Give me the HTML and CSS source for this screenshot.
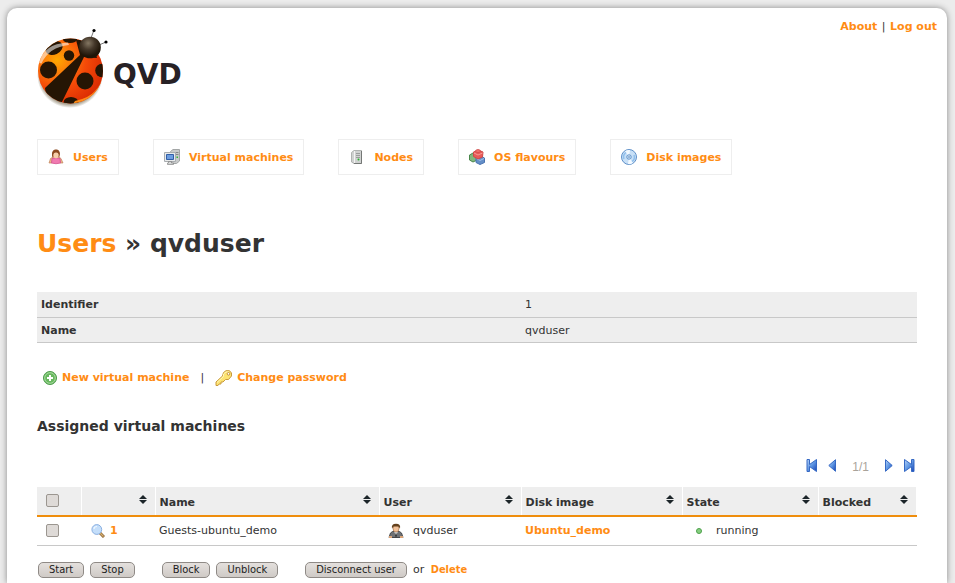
FILE: index.html
```html
<!DOCTYPE html>
<html lang="en">
<head>
<meta charset="utf-8">
<title>QVD - Users</title>
<link rel="stylesheet" href="styles.css">
</head>
<body>
<svg class="defs" width="0" height="0" aria-hidden="true">
  <defs>
    <linearGradient id="blue" x1="0" y1="0" x2="1" y2="1"><stop offset="0" stop-color="#b5d2f8"/><stop offset=".5" stop-color="#5f97e3"/><stop offset="1" stop-color="#1743b5"/></linearGradient>
    <symbol id="sort" viewBox="0 0 8 10"><path d="M4 0 8 4H0zM4 9 0 5h8z" fill="#1c2529"/></symbol>
  </defs>
</svg>
<div class="page">
  <header class="top">
    <a class="logo" href="#">
      <svg width="74" height="84" viewBox="0 0 74 84" aria-hidden="true">
        <defs>
          <radialGradient id="shell" gradientUnits="userSpaceOnUse" cx="20" cy="32" r="48"><stop offset="0" stop-color="#ffa800"/><stop offset=".3" stop-color="#fb7a0a"/><stop offset=".6" stop-color="#f54a08"/><stop offset="1" stop-color="#dc2d03"/></radialGradient>
          <radialGradient id="head" cx=".42" cy=".3" r=".6"><stop offset="0" stop-color="#837662"/><stop offset=".5" stop-color="#45382a"/><stop offset="1" stop-color="#1f1508"/></radialGradient>
          <radialGradient id="under" cx=".5" cy=".5" r=".5"><stop offset=".84" stop-color="#8a8069"/><stop offset="1" stop-color="#fff"/></radialGradient>
          <clipPath id="body"><circle cx="33.500" cy="43" r="32.500"/></clipPath>
        </defs>
        <circle cx="33" cy="47" r="33" fill="url(#under)"/>
        <g clip-path="url(#body)">
          <path d="M0 8h74v76H0z" fill="url(#shell)"/>
          <g fill="#251504">
            <circle cx="11.500" cy="42" r="8.500"/><circle cx="32" cy="27.500" r="5.200"/>
            <ellipse cx="17" cy="20" rx="9" ry="6.500" transform="rotate(-25 17 20)"/>
            <ellipse cx="33" cy="11.500" rx="7" ry="3.500"/>
            <circle cx="48" cy="53" r="8.500"/><circle cx="65" cy="42.500" r="6.800"/>
            <ellipse cx="34" cy="74.500" rx="7.500" ry="5.500"/>
            <path d="M39 12 43 27 8 60 10 76 24 76 47 29 60 30 54 10z"/>
          </g>
          <path d="M64 62Q53 74 36 76L38 73Q52 70 58 63Q65 56 66 47z" fill="#ff8b18"/>
        </g>
        <path d="M2.500 35Q6 16 31 14.500L32 17Q12 19 4.500 35.500z" fill="#fff" opacity=".55"/>
        <path d="M54 10 57 2M62 17 69 14" stroke="#777" stroke-width="1"/>
        <circle cx="57" cy="2.500" r="1.600"/><circle cx="69" cy="14" r="1.600"/>
        <circle cx="53" cy="19.500" r="10.800" fill="url(#head)"/>
      </svg>
      <span class="brand">QVD</span>
    </a>
    <div class="account"><a href="#">About</a> | <a href="#">Log out</a></div>
  </header>

  <nav class="menu">
    <a href="#"><svg width="16" height="16" viewBox="0 0 16 16"><path d="M4.500 9C3 3 5 .5 8 .5S13 3 11 9z" fill="#8c4a20"/><path d="M5 8 2.500 9.500 1 14h3v-2l4 1 4-1v2h3l-2-4.500L11 8z" fill="#efb58d" stroke="#b8794e" stroke-width=".6"/><path d="M4 9.500Q8 8 12 9.500L12.500 14Q8 15.500 3.500 14z" fill="#f07ab0" stroke="#d4538f" stroke-width=".8"/><ellipse cx="8" cy="6" rx="2.700" ry="3.200" fill="#f7cfaa"/><path d="M4.500 7Q5 3.500 8 3.500q3 0 3.500 3.500 1-5.500-3.500-5.500T4.500 7z" fill="#8c4a20"/></svg>Users</a>
    <a href="#"><svg width="16" height="16" viewBox="0 0 16 16"><path d="M6.500 2.500 9 .5h6.500V12L12.500 14.500h-6z" fill="#c9cbcb" stroke="#a3a6a6"/><path d="M11.500 3.500h3M11.500 5.500h3" stroke="#888"/><path d="M12.500 7.500h1.500v1.500h-1.500z" fill="#31b636"/><path d="M.5 3.500h11v9H.5z" fill="#e9ebeb" stroke="#a9adb0"/><path d="M2.500 5.500h7v5h-7z" fill="#6d9de0" stroke="#315fa7"/><path d="M4.500 12.500h3v1.500h2v1.500h-6V14h1z" fill="#d5d7d7" stroke="#777" stroke-width=".6"/></svg>Virtual machines</a>
    <a href="#"><svg width="16" height="16" viewBox="0 0 16 16"><path d="M2.500 3.500 5 1.500h7.500v13H5l-2.500-1.500z" fill="#d0d2d1" stroke="#b0b3b1"/><path d="M5.500 2v12" stroke="#f4f4f4"/><path d="M12.500 2v12.500H5" fill="none" stroke="#747775"/><path d="M7 4.500h4M7 6.500h4M7 8.500h4" stroke="#9b9d9c"/><circle cx="9.500" cy="10.500" r="1" fill="#24b52a"/></svg>Nodes</a>
    <a href="#"><svg width="16" height="16" viewBox="0 0 16 16"><path d="M.5 6 4 4l4 2v5l-4 2-3.500-2z" fill="#80b77c" stroke="#49864a"/><path d="M7 9 11.500 7 15.500 9v4.500L11 15.500 7 13.500z" fill="#648fc8" stroke="#4a73b0"/><path d="m7.500 9.500 3.500 2 4-2" fill="none" stroke="#a2c1e8"/><path d="M4.500 3 9 1l5 2-.5 5L9 10 4.500 7.500z" fill="#e85b58" stroke="#d04848"/><path d="m5 4 4 2 4.500-2" fill="none" stroke="#f79b96"/><ellipse cx="9" cy="2" rx="2.500" ry="1.500" fill="#f0716c" stroke="#c94140" stroke-width=".6"/></svg>OS flavours</a>
    <a href="#"><svg width="16" height="16" viewBox="0 0 16 16"><circle cx="8" cy="8" r="7.500" fill="#c8e0f7" stroke="#5f90c8"/><path d="M8 8 4 2Q7 .5 9 1zM8 8l4 6q-2 1.500-5 1z" fill="#f2f9ff"/><path d="M3 10A5.500 5.500 0 0 1 5 3.500M13 6a5.500 5.500 0 0 1-2 6.500" fill="none" stroke="#90bfec" stroke-width="1.500"/><circle cx="8" cy="8" r="2.200" fill="#e9f4ff" stroke="#5b8fc8"/><circle cx="8" cy="8" r=".8" fill="#356ba9"/></svg>Disk images</a>
  </nav>

  <h1><a href="#">Users</a> » qvduser</h1>

  <table class="details">
    <tr><th scope="row">Identifier</th><td>1</td></tr>
    <tr><th scope="row">Name</th><td>qvduser</td></tr>
  </table>

  <div class="actions">
    <a href="#"><svg width="16" height="16" viewBox="0 0 16 16"><circle cx="8" cy="8" r="6.500" fill="#68b85f" stroke="#4c9a4a"/><circle cx="8" cy="8" r="5.300" fill="none" stroke="#a8dba0"/><path d="M8 5v6M5 8h6" stroke="#fff" stroke-width="2"/></svg>New virtual machine</a>
    <span>|</span>
    <a href="#"><svg width="18" height="16" viewBox="0 0 18 16"><path d="M8.500 2.500 11 .7h3.500L16.500 3v3l-3 3.500h-3L8 12H6v2H4l-1 1.500H1V12l6.500-6z" fill="#fce372" stroke="#c99a3c" stroke-linejoin="round"/><path d="M2 12.500 8.500 6.500V4L11 2h3" fill="none" stroke="#fff6b8"/><circle cx="13.500" cy="3.800" r="1.300" fill="#fff" stroke="#b67c21" stroke-width=".8"/></svg>Change password</a>
  </div>

  <h2>Assigned virtual machines</h2>

  <div class="pager">
    <a href="#" aria-label="First page"><svg width="12" height="13" viewBox="0 0 12 13"><path d="M1 .5h2.500v5L10.500.5v12l-7-5v5H1z" fill="url(#blue)" stroke="#3669c4"/></svg></a>
    <a href="#" aria-label="Previous page"><svg width="8" height="13" viewBox="0 0 8 13"><path d="M7.500.7v11.600L.8 6.500z" fill="url(#blue)" stroke="#3669c4"/></svg></a>
    <span>1/1</span>
    <a href="#" aria-label="Next page"><svg width="8" height="13" viewBox="0 0 8 13"><path d="M.5.7v11.600L7.200 6.500z" fill="url(#blue)" stroke="#3669c4"/></svg></a>
    <a href="#" aria-label="Last page"><svg width="12" height="13" viewBox="0 0 12 13"><path d="M11 .5H8.500v5L1.500.5v12l7-5v5H11z" fill="url(#blue)" stroke="#3669c4"/></svg></a>
  </div>

  <table class="machines">
    <colgroup><col class="c-check"><col class="c-id"><col class="c-name"><col class="c-user"><col class="c-disk"><col class="c-state"><col class="c-blocked"></colgroup>
    <thead>
      <tr>
        <th><input type="checkbox" aria-label="Select all"></th>
        <th><div class="head"><span></span><svg width="8" height="10"><use href="#sort"/></svg></div></th>
        <th><div class="head"><span>Name</span><svg width="8" height="10"><use href="#sort"/></svg></div></th>
        <th><div class="head"><span>User</span><svg width="8" height="10"><use href="#sort"/></svg></div></th>
        <th><div class="head"><span>Disk image</span><svg width="8" height="10"><use href="#sort"/></svg></div></th>
        <th><div class="head"><span>State</span><svg width="8" height="10"><use href="#sort"/></svg></div></th>
        <th><div class="head"><span>Blocked</span><svg width="8" height="10"><use href="#sort"/></svg></div></th>
      </tr>
    </thead>
    <tbody>
      <tr>
        <td><input type="checkbox" aria-label="Select Guests-ubuntu_demo"></td>
        <td><a class="cell id" href="#"><svg width="14" height="14" viewBox="0 0 14 14"><path d="m9 9 4 4" stroke="#8d6738" stroke-width="3"/><path d="m9 9 3.500 3.500" stroke="#d7b06f" stroke-width="1.200"/><circle cx="5.800" cy="5.500" r="4.900" fill="#c4defa" stroke="#8aafe0"/><path d="M3 5q0-2.500 3-2.500" fill="none" stroke="#eef7ff" stroke-width="1.200"/></svg>1</a></td>
        <td>Guests-ubuntu_demo</td>
        <td><div class="cell user"><svg width="16" height="16" viewBox="0 0 16 16"><path d="M4.500 8.500 2.500 10 1 14.500h14L13.500 10l-2-1.500z" fill="#6e7175" stroke="#45474a"/><path d="M6 8h4l-2 5z" fill="#eee"/><path d="m8 9 1 4-1 1-1-1z" fill="#333"/><path d="M1 13h3v2H1zM12 13h3v2h-3z" fill="#dba477"/><ellipse cx="8" cy="5.500" rx="3" ry="3.500" fill="#f1c199" stroke="#9b6335" stroke-width=".6"/><path d="M4 5.500Q3 .7 8 .7t4 4.800L10.500 3.500h-5z" fill="#63401c"/></svg>qvduser</div></td>
        <td><a href="#">Ubuntu_demo</a></td>
        <td><div class="cell state"><svg width="8" height="8" viewBox="0 0 8 8"><circle cx="4" cy="4" r="2.500" fill="#86cf80" stroke="#4da04b"/></svg>running</div></td>
        <td></td>
      </tr>
    </tbody>
  </table>

  <div class="bulk">
    <div class="group"><button type="button">Start</button><button type="button">Stop</button></div>
    <div class="group"><button type="button">Block</button><button type="button">Unblock</button></div>
    <div class="group"><button type="button">Disconnect user</button><span>or <a href="#">Delete</a></span></div>
  </div>
</div>
</body>
</html>
```
FILE: styles.css
```css
* { box-sizing: border-box; }
body {
  margin: 0;
  padding: 8px 8px 0 7px;
  background: #ececec;
  color: #333;
  font: 11px/16px "DejaVu Sans", Verdana, sans-serif;
}
.defs { position: absolute; }
svg { display: block; flex: none; }
a { color: #ff8c14; font-weight: bold; text-decoration: none; }
.page {
  min-height: calc(100vh - 8px);
  padding: 0 30px;
  background: #fff;
  border-radius: 10px 10px 0 0;
  box-shadow: 0 0 6px #888;
}
.top { display: flex; justify-content: space-between; height: 131px; padding-top: 20px; }
.logo { display: flex; align-items: flex-start; gap: 2px; color: #272125; }
.brand { margin-top: 31px; font-size: 28px; line-height: 32px; font-weight: bold; }
.account { margin: -9px -20px 0 0; }
.account a:first-child { margin-right: 1px; }
.account a:last-child { margin-left: 1px; }
.menu { display: flex; gap: 34px; }
.menu a {
  display: flex;
  align-items: center;
  gap: 9px;
  height: 36px;
  padding: 1px 10px 0;
  border: 1px solid #eee;
}
.menu svg { margin-bottom: 2px; }
h1 { margin: 53px 0 32px; font-size: 25px; line-height: 32px; }
table { width: 100%; border-collapse: collapse; table-layout: fixed; }
th { text-align: left; }
.details th, .details td {
  width: 55%;
  height: 25px;
  padding: 2px 4px 0;
  background: #eee;
  border-bottom: 1px solid #c8c8c8;
}
.details td { width: 45%; }
.actions { display: flex; gap: 11px; margin-top: 27px; padding-left: 5px; }
.actions a { display: flex; align-items: center; gap: 4px; }
h2 { margin: 30px 0 22px; font-size: 14px; line-height: 20px; }
.pager { display: flex; justify-content: flex-end; align-items: center; height: 16px; gap: 10px; padding-right: 2px; color: #aaa39b; font-family: "Liberation Sans", Arial, sans-serif; }
.pager span { margin: 3px 6px 0; font-size: 12px; }
.machines { margin-top: 13px; }
.c-check { width: 44px; }
.c-id { width: 74px; }
.c-name { width: 224px; }
.c-user { width: 142px; }
.c-disk { width: 161px; }
.c-state { width: 136px; }
.machines th { height: 29px; padding: 0 8px 0 4px; background: #eee; border-right: 1px solid #fff; border-bottom: 2px solid #ef8d0c; }
.machines td { height: 30px; padding: 0 4px; border-bottom: 1px solid #c8c8c8; }
.machines tr > :first-child { padding-left: 9px; }
.head { display: flex; justify-content: space-between; align-items: center; }
.head span { margin-top: 5px; }
.head svg { margin-bottom: 1px; }
input[type="checkbox"] {
  appearance: none;
  display: block;
  width: 13px;
  height: 13px;
  margin: 0;
  border: 1px solid #9b9690;
  border-radius: 2px;
  background: #dedad7;
}
.cell { display: flex; align-items: center; }
.id { gap: 5px; padding-left: 6px; }
.user { gap: 9px; padding-left: 5px; }
.state { gap: 13px; padding-left: 9px; }
.bulk { display: flex; gap: 27px; margin-top: 16px; padding-left: 1px; }
.group { display: flex; align-items: center; gap: 6px; }
button {
  height: 16px;
  padding: 0 10px;
  border: 1px solid #8f8a86;
  border-radius: 5px;
  background: linear-gradient(#e4e0dd, #cfcac6);
  color: #1c1c1c;
  font: 11px/14px "DejaVu Sans Condensed", "DejaVu Sans", sans-serif;
}
.bulk a { margin-left: 3px; font-family: "DejaVu Sans Condensed", "DejaVu Sans", sans-serif; }
```
